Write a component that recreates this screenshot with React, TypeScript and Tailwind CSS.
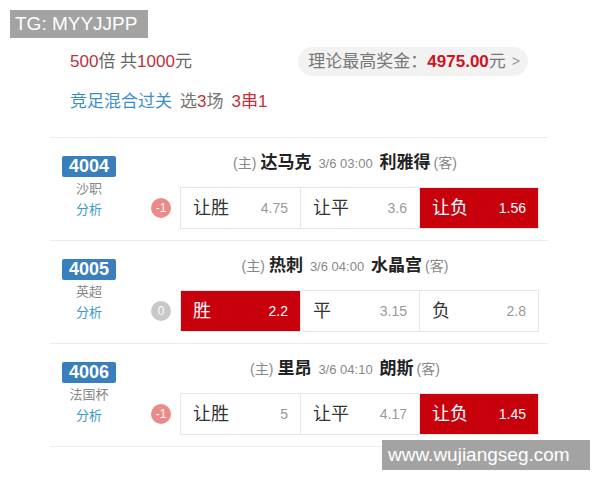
import React from 'react';

// --- Types ---
interface Odd {
    label: string;
    value: string;
    selected?: boolean;
}

interface Match {
    code: string;
    league: string;
    home: string;
    away: string;
    time: string;
    handicap: string;
    odds: Odd[];
}

const matches: Match[] = [
    {
        code: '4004', league: '沙职', home: '达马克', away: '利雅得', time: '3/6 03:00', handicap: '-1',
        odds: [{ label: '让胜', value: '4.75' }, { label: '让平', value: '3.6' }, { label: '让负', value: '1.56', selected: true }],
    },
    {
        code: '4005', league: '英超', home: '热刺', away: '水晶宫', time: '3/6 04:00', handicap: '0',
        odds: [{ label: '胜', value: '2.2', selected: true }, { label: '平', value: '3.15' }, { label: '负', value: '2.8' }],
    },
    {
        code: '4006', league: '法国杯', home: '里昂', away: '朗斯', time: '3/6 04:10', handicap: '-1',
        odds: [{ label: '让胜', value: '5' }, { label: '让平', value: '4.17' }, { label: '让负', value: '1.45', selected: true }],
    },
];

const font = { fontFamily: '"Liberation Sans", "Noto Sans CJK SC", sans-serif' };

const MatchRow = ({ m }: { m: Match }) => (
    <div className="flex border-t border-[#ececec] pt-[12px] h-[103px]">
        {/* Left: code + league */}
        <div className="w-[78px] flex flex-col items-center pt-[6px]">
            <div className="bg-[#3a7fbd] text-white font-bold text-[18px] leading-[21px] w-[54px] text-center rounded-[2px]">{m.code}</div>
            <div className="text-[13px] text-[#888] mt-[3px] leading-[17px]">{m.league}</div>
            <div className="text-[13px] text-[#3a9ac8] mt-[4px] leading-[17px]">分析</div>
        </div>

        {/* Right: header + odds */}
        <div className="flex-1 flex flex-col">
            <div className="flex items-baseline justify-center pl-[14px] h-[26px] leading-[26px] whitespace-nowrap">
                <span className="text-[14px] text-[#888]">(主)</span>
                <span className="text-[17px] font-bold text-[#222] ml-[4px]">{m.home}</span>
                <span className="text-[13px] text-[#888] ml-[7px]">{m.time}</span>
                <span className="text-[17px] font-bold text-[#222] ml-[7px]">{m.away}</span>
                <span className="text-[14px] text-[#888] ml-[3px]">(客)</span>
            </div>
            <div className="flex items-center mt-[11px]">
                <div className="w-[52px] flex justify-start pl-[23px]">
                    <div className={`w-[20px] h-[20px] rounded-full flex items-center justify-center text-white text-[12px] ${m.handicap === '0' ? 'bg-[#c8c8c8]' : 'bg-[#ec8a8a]'}`}>
                        {m.handicap}
                    </div>
                </div>
                <div className="flex border border-[#e6e6e6] h-[42px]">
                    {m.odds.map((o, i) => (
                        <div
                            key={i}
                            className={`w-[119px] flex items-center justify-between px-[12px] ${i > 0 ? 'border-l border-[#e6e6e6]' : ''} ${o.selected ? 'bg-[#c8000b] text-white' : 'bg-white'}`}
                        >
                            <span className={`text-[18px] ${o.selected ? 'text-white' : 'text-[#333]'}`}>{o.label}</span>
                            <span className={`text-[14px] ${o.selected ? 'text-white' : 'text-[#999]'}`}>{o.value}</span>
                        </div>
                    ))}
                </div>
            </div>
        </div>
    </div>
);

const App = () => {
    return (
        <div className="relative w-[600px] h-[480px] bg-white overflow-hidden" style={font}>
            {/* Watermark badge top-left */}
            <div className="absolute left-[10px] top-[10px] w-[138px] h-[28px] bg-[#a3a3a3] text-white text-[19px] leading-[28px] pl-[5px]">
                TG: MYYJJPP
            </div>

            <div className="pt-[47px] pl-[50px] pr-[52px]">
                {/* Summary */}
                <div className="flex items-center justify-between h-[29px]">
                    <div className="pl-[20px] text-[17px]">
                        <span className="text-[#c0303a]">500</span>
                        <span className="text-[#666]">倍 共</span>
                        <span className="text-[#c0303a]">1000</span>
                        <span className="text-[#666]">元</span>
                    </div>
                    <div className="flex items-center bg-[#f2f2f2] rounded-full h-[29px] pl-[10px] pr-[8px] mr-[20px] text-[17px]">
                        <span className="text-[#777]">理论最高奖金：</span>
                        <span className="text-[#d0131e] font-bold">4975.00</span>
                        <span className="text-[#777]">元</span>
                        <span className="text-[#999] ml-[6px] text-[14px]">&gt;</span>
                    </div>
                </div>
                <div className="pl-[20px] mt-[11px] h-[30px] flex items-center text-[17px]">
                    <span className="text-[#3a90c4]">竞足混合过关</span>
                    <span className="text-[#777] ml-[8px]">选</span>
                    <span className="text-[#c0303a]">3</span>
                    <span className="text-[#777]">场</span>
                    <span className="text-[#c0303a] ml-[8px]">3串1</span>
                </div>

                {/* Matches */}
                <div className="mt-[20px]">
                    {matches.map((m) => (
                        <MatchRow key={m.code} m={m} />
                    ))}
                    <div className="border-t border-[#ececec]" />
                </div>
            </div>

            {/* Watermark badge bottom-right */}
            <div className="absolute left-[382px] top-[440px] w-[208px] h-[30px] bg-[#a3a3a3] text-white text-[19px] leading-[30px] pl-[6px]">
                www.wujiangseg.com
            </div>
        </div>
    );
};

export default App;
